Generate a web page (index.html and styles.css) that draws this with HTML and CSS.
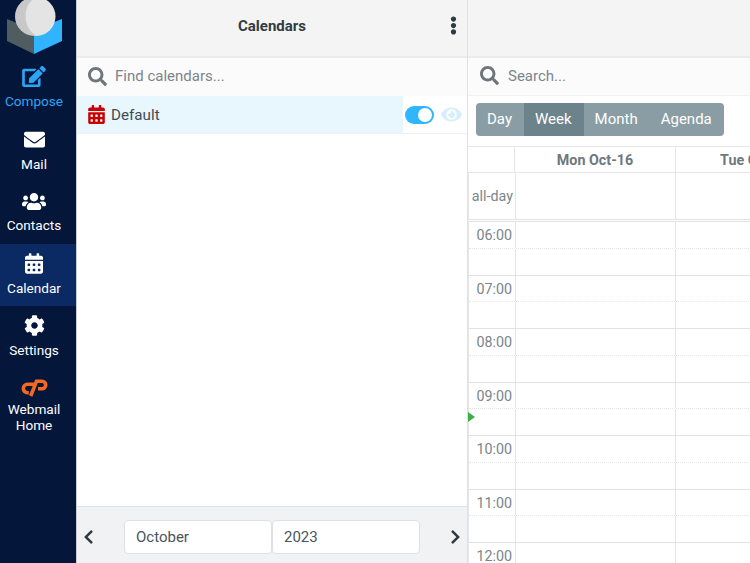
FILE: index.html
```html
<!DOCTYPE html>
<html lang="en">
<head>
    <meta charset="UTF-8">
    <meta name="viewport" content="width=device-width, initial-scale=1.0">
    <title>Calendar</title>
    <link rel="stylesheet" href="styles.css">
</head>
<body>
    <svg class="sprites" aria-hidden="true">
        <symbol id="i-search" viewBox="0 0 512 512"><path d="M505 442.7L405.3 343c-4.5-4.5-10.6-7-17-7H372c27.6-35.3 44-79.7 44-128C416 93.1 322.9 0 208 0S0 93.1 0 208s93.1 208 208 208c48.3 0 92.7-16.4 128-44v16.3c0 6.4 2.5 12.5 7 17l99.7 99.7c9.4 9.4 24.6 9.4 33.9 0l28.3-28.3c9.4-9.4 9.4-24.6.1-34zM208 336c-70.7 0-128-57.2-128-128 0-70.7 57.2-128 128-128 70.7 0 128 57.2 128 128 0 70.7-57.2 128-128 128z"/></symbol>
        <symbol id="i-calendar" viewBox="0 0 448 512"><path d="M0 464c0 26.5 21.5 48 48 48h352c26.5 0 48-21.5 48-48V192H0v272zm320-196c0-6.6 5.4-12 12-12h40c6.6 0 12 5.4 12 12v40c0 6.6-5.4 12-12 12h-40c-6.6 0-12-5.4-12-12v-40zm0 128c0-6.6 5.4-12 12-12h40c6.6 0 12 5.4 12 12v40c0 6.6-5.4 12-12 12h-40c-6.6 0-12-5.4-12-12v-40zM192 268c0-6.6 5.4-12 12-12h40c6.6 0 12 5.4 12 12v40c0 6.6-5.4 12-12 12h-40c-6.6 0-12-5.4-12-12v-40zm0 128c0-6.6 5.4-12 12-12h40c6.6 0 12 5.4 12 12v40c0 6.6-5.4 12-12 12h-40c-6.6 0-12-5.4-12-12v-40zM64 268c0-6.6 5.4-12 12-12h40c6.6 0 12 5.4 12 12v40c0 6.6-5.4 12-12 12H76c-6.6 0-12-5.4-12-12v-40zm0 128c0-6.6 5.4-12 12-12h40c6.6 0 12 5.4 12 12v40c0 6.6-5.4 12-12 12H76c-6.6 0-12-5.4-12-12v-40zM400 64h-48V16c0-8.8-7.2-16-16-16h-32c-8.8 0-16 7.2-16 16v48H160V16c0-8.8-7.2-16-16-16h-32c-8.8 0-16 7.2-16 16v48H48C21.5 64 0 85.5 0 112v48h448v-48c0-26.5-21.5-48-48-48z"/></symbol>
    </svg>

    <div class="app">
        <nav class="sidebar">
            <div class="logo">
                <svg viewBox="0 0 70 57" width="70" height="57">
                    <polygon points="7,19 34,30 34,54 7,41" fill="#4f5c60"/>
                    <polygon points="34,30 62,19 62,41 34,54" fill="#30b4ff"/>
                    <circle cx="34.5" cy="16.5" r="19.5" fill="#c8c8c8"/>
                    <path d="M36 -3C28 2 25.500 9 25.500 16C25.500 24 29 31 36 36A19.500 19.500 0 0 0 36 -3z" fill="#e4e4e4"/>
                </svg>
            </div>
            <a class="nav-item compose" href="#">
                <svg viewBox="0 0 576 512" width="24" height="21"><path d="M402.6 83.2l90.2 90.2c3.8 3.8 3.8 10 0 13.8L274.4 405.6l-92.8 10.3c-12.4 1.4-22.9-9.1-21.5-21.5l10.3-92.8L388.8 83.2c3.8-3.8 10-3.8 13.8 0zm162-22.9l-48.8-48.8c-15.2-15.2-39.9-15.2-55.2 0l-35.4 35.4c-3.8 3.8-3.8 10 0 13.8l90.2 90.2c3.8 3.8 10 3.8 13.8 0l35.4-35.4c15.2-15.3 15.2-40 0-55.2zM384 346.2V448H64V128h229.8c3.2 0 6.2-1.3 8.5-3.5l40-40c7.6-7.6 2.2-20.5-8.5-20.5H48C21.5 64 0 85.5 0 112v352c0 26.5 21.5 48 48 48h352c26.5 0 48-21.5 48-48V306.2c0-10.7-12.9-16-20.5-8.5l-40 40c-2.2 2.3-3.5 5.3-3.5 8.5z"/></svg>
                <span>Compose</span>
            </a>
            <a class="nav-item mail" href="#">
                <svg viewBox="0 0 512 512" width="21" height="21"><path d="M502.3 190.8c3.9-3.1 9.7-.2 9.7 4.7V400c0 26.5-21.5 48-48 48H48c-26.5 0-48-21.5-48-48V195.6c0-5 5.7-7.8 9.7-4.7 22.4 17.4 52.1 39.5 154.1 113.6 21.1 15.4 56.7 47.8 92.2 47.6 35.7.3 72-32.8 92.3-47.6 102-74.1 131.6-96.3 154-113.7zM256 320c23.2.4 56.6-29.2 73.4-41.4 132.7-96.3 142.8-104.7 173.4-128.7 5.8-4.5 9.2-11.5 9.2-18.9v-19c0-26.5-21.5-48-48-48H48C21.5 64 0 85.5 0 112v19c0 7.4 3.4 14.3 9.2 18.9 30.6 23.9 40.7 32.4 173.4 128.7 16.8 12.2 50.2 41.8 73.4 41.4z"/></svg>
                <span>Mail</span>
            </a>
            <a class="nav-item contacts" href="#">
                <svg viewBox="0 0 640 512" width="24" height="21"><path d="M96 224c35.3 0 64-28.7 64-64s-28.7-64-64-64-64 28.7-64 64 28.7 64 64 64zm448 0c35.3 0 64-28.7 64-64s-28.7-64-64-64-64 28.7-64 64 28.7 64 64 64zm32 32h-64c-17.6 0-33.5 7.1-45.1 18.6 40.3 22.1 68.9 62 75.1 109.4h66c17.7 0 32-14.3 32-32v-32c0-35.3-28.7-64-64-64zm-256 0c61.9 0 112-50.1 112-112S381.9 32 320 32 208 82.1 208 144s50.1 112 112 112zm76.8 32h-8.3c-20.8 10-43.9 16-68.5 16s-47.6-6-68.5-16h-8.3C179.6 288 128 339.6 128 403.2V432c0 26.5 21.5 48 48 48h288c26.5 0 48-21.5 48-48v-28.8c0-63.6-51.6-115.2-115.2-115.2zm-223.7-13.4C161.5 263.1 145.6 256 128 256H64c-35.3 0-64 28.7-64 64v32c0 17.7 14.3 32 32 32h65.9c6.3-47.4 34.9-87.3 75.2-109.4z"/></svg>
                <span>Contacts</span>
            </a>
            <a class="nav-item active" href="#">
                <svg width="18" height="21"><use href="#i-calendar"/></svg>
                <span>Calendar</span>
            </a>
            <a class="nav-item" href="#">
                <svg viewBox="0 0 512 512" width="21" height="21"><path d="M487.4 315.7l-42.6-24.6c4.3-23.2 4.3-47 0-70.2l42.6-24.6c4.9-2.8 7.1-8.6 5.5-14-11.1-35.6-30-67.8-54.7-94.6-3.8-4.1-10-5.1-14.8-2.3L380.8 110c-17.9-15.4-38.5-27.3-60.8-35.1V25.8c0-5.6-3.9-10.5-9.4-11.7-36.7-8.2-74.3-7.8-109.2 0-5.5 1.2-9.4 6.1-9.4 11.7V75c-22.2 7.9-42.8 19.8-60.8 35.1L88.7 85.5c-4.9-2.8-11-1.9-14.8 2.3-24.7 26.7-43.6 58.9-54.7 94.6-1.7 5.4.6 11.2 5.5 14L67.3 221c-4.3 23.2-4.3 47 0 70.2l-42.6 24.6c-4.9 2.8-7.1 8.6-5.5 14 11.1 35.6 30 67.8 54.7 94.6 3.8 4.1 10 5.1 14.8 2.3l42.6-24.6c17.9 15.4 38.5 27.3 60.8 35.1v49.2c0 5.6 3.9 10.5 9.4 11.7 36.7 8.2 74.3 7.8 109.2 0 5.5-1.2 9.4-6.1 9.4-11.7v-49.2c22.2-7.9 42.8-19.8 60.8-35.1l42.6 24.6c4.9 2.8 11 1.9 14.8-2.3 24.7-26.7 43.6-58.9 54.7-94.6 1.5-5.5-.7-11.3-5.6-14.1zM256 336c-44.1 0-80-35.9-80-80s35.9-80 80-80 80 35.9 80 80-35.9 80-80 80z"/></svg>
                <span>Settings</span>
            </a>
            <a class="nav-item webmail" href="#">
                <svg class="cp-logo" viewBox="0 0 27 18" width="27" height="18">
                    <path d="M13 5.300H6.500a4.200 4.200 0 0 0 0 8.400H7.800"/>
                    <path d="M9.700 17L15.500 2.300H21a3.700 3.700 0 0 1 0 7.400H17"/>
                </svg>
                <span>Webmail<br>Home</span>
            </a>
        </nav>

        <section class="panel">
            <div class="panel-header">
                <h2>Calendars</h2>
                <svg class="menu-dots" viewBox="0 0 192 512" width="7" height="19"><path d="M96 184c39.8 0 72 32.2 72 72s-32.2 72-72 72-72-32.2-72-72 32.2-72 72-72zM24 80c0 39.8 32.2 72 72 72s72-32.2 72-72S135.8 8 96 8 24 40.2 24 80zm0 352c0 39.8 32.2 72 72 72s72-32.2 72-72-32.2-72-72-72-72 32.2-72 72z"/></svg>
            </div>
            <div class="search-row">
                <svg class="search-icon"><use href="#i-search"/></svg>
                <span>Find calendars...</span>
            </div>
            <div class="calendar-row">
                <div class="calendar-name">
                    <svg class="calendar-icon"><use href="#i-calendar"/></svg>
                    <span>Default</span>
                </div>
                <div class="calendar-actions">
                    <span class="toggle"></span>
                    <svg class="eye" viewBox="0 0 576 512" width="21" height="19"><path d="M572.52 241.4C518.29 135.59 410.93 64 288 64S57.68 135.64 3.48 241.41a32.35 32.35 0 0 0 0 29.19C57.71 376.41 165.07 448 288 448s230.32-71.64 284.52-177.41a32.35 32.35 0 0 0 0-29.19zM288 400a144 144 0 1 1 144-144 143.93 143.93 0 0 1-144 144zm0-240a95.31 95.31 0 0 0-25.31 3.79 47.85 47.85 0 0 1-66.9 66.9A95.78 95.78 0 1 0 288 160z"/></svg>
                </div>
            </div>
            <div class="panel-spacer"></div>
            <div class="month-picker">
                <svg class="chevron" viewBox="0 0 320 512" width="11" height="16"><path d="M34.52 239.03L228.87 44.69c9.37-9.37 24.57-9.37 33.94 0l22.67 22.67c9.36 9.36 9.37 24.52.04 33.9L131.49 256l154.02 154.75c9.34 9.38 9.32 24.54-.04 33.9l-22.67 22.67c-9.37 9.37-24.57 9.37-33.94 0L34.52 272.97c-9.37-9.37-9.37-24.57 0-33.94z"/></svg>
                <div class="selects">
                    <div class="select">October</div>
                    <div class="select">2023</div>
                </div>
                <svg class="chevron" viewBox="0 0 320 512" width="11" height="16"><path d="M285.476 272.971L91.132 467.314c-9.373 9.373-24.569 9.373-33.941 0l-22.667-22.667c-9.357-9.357-9.375-24.522-.04-33.901L188.505 256 34.484 101.255c-9.335-9.379-9.317-24.544.04-33.901l22.667-22.667c9.373-9.373 24.569-9.373 33.941 0L285.475 239.03c9.373 9.372 9.373 24.568.001 33.941z"/></svg>
            </div>
        </section>

        <main class="main">
            <div class="main-header"></div>
            <div class="search-row main-search">
                <svg class="search-icon"><use href="#i-search"/></svg>
                <span>Search...</span>
            </div>
            <div class="toolbar">
                <div class="view-buttons">
                    <a href="#">Day</a>
                    <a href="#" class="selected">Week</a>
                    <a href="#">Month</a>
                    <a href="#">Agenda</a>
                </div>
            </div>
            <div class="week-head">
                <div class="axis"></div>
                <div class="day">Mon Oct-16</div>
                <div class="day">Tue Oct-17</div>
            </div>
            <div class="all-day">
                <div class="axis">all-day</div>
                <div class="day"></div>
                <div class="day"></div>
            </div>
            <div class="grid">
                <div class="hour"><div class="axis">06:00</div><div class="day"></div><div class="day"></div></div>
                <div class="half"><div class="axis"></div><div class="day"></div><div class="day"></div></div>
                <div class="hour"><div class="axis">07:00</div><div class="day"></div><div class="day"></div></div>
                <div class="half"><div class="axis"></div><div class="day"></div><div class="day"></div></div>
                <div class="hour"><div class="axis">08:00</div><div class="day"></div><div class="day"></div></div>
                <div class="half"><div class="axis"></div><div class="day"></div><div class="day"></div></div>
                <div class="hour"><div class="axis">09:00</div><div class="day"></div><div class="day"></div></div>
                <div class="half"><div class="axis"></div><div class="day"></div><div class="day"></div></div>
                <div class="hour"><div class="axis">10:00</div><div class="day"></div><div class="day"></div></div>
                <div class="half"><div class="axis"></div><div class="day"></div><div class="day"></div></div>
                <div class="hour"><div class="axis">11:00</div><div class="day"></div><div class="day"></div></div>
                <div class="half"><div class="axis"></div><div class="day"></div><div class="day"></div></div>
                <div class="hour"><div class="axis">12:00</div><div class="day"></div><div class="day"></div></div>
                <span class="now-arrow"></span>
            </div>
        </main>
    </div>
</body>
</html>
```

FILE: styles.css
```css
html, body {
    margin: 0;
    padding: 0;
    height: 100%;
    overflow: hidden;
}
body {
    font-family: Roboto, "Liberation Sans", sans-serif;
    font-size: 15px;
    color: #3f4b53;
    background-color: #fff;
}
a {
    text-decoration: none;
    color: inherit;
}
.sprites {
    display: none;
}
.app {
    display: flex;
    height: 563px;
}

/* left nav */
.sidebar {
    width: 76px;
    flex: none;
    background-color: #04173b;
    color: #fff;
}
.logo {
    height: 57px;
    overflow: hidden;
}
.logo svg {
    display: block;
}
.nav-item {
    display: flex;
    flex-direction: column;
    align-items: center;
    height: 62.3px;
    box-sizing: border-box;
    padding: 9px 8px 0 0;
    font-size: 13.6px;
    line-height: 16px;
    text-align: center;
}
.nav-item svg {
    flex: none;
    fill: #fff;
    margin-bottom: 6px;
}
.nav-item.compose {
    color: #2da5f5;
}
.nav-item.compose svg {
    fill: #2da5f5;
}
.nav-item.mail {
    padding-top: 10px;
}
.nav-item.contacts svg {
    margin-bottom: 5px;
}
.nav-item.active {
    background-color: #0b2a63;
}
.nav-item.webmail {
    padding-top: 11px;
}
.nav-item.webmail svg {
    margin-bottom: 4px;
}
.nav-item .cp-logo {
    fill: none;
}
.cp-logo path {
    fill: none;
    stroke: #f26a21;
    stroke-width: 3.6;
}

/* calendars panel */
.panel {
    width: 392px;
    flex: none;
    display: flex;
    flex-direction: column;
    border-left: 1px solid #c9ced4;
    border-right: 1px solid #dfe2e4;
    box-sizing: border-box;
}
.panel-header {
    position: relative;
    height: 58px;
    flex: none;
    box-sizing: border-box;
    display: flex;
    align-items: center;
    justify-content: center;
    padding-bottom: 5px;
    background-color: #f4f4f4;
    border-bottom: 2px solid #e9ecec;
}
.panel-header h2 {
    margin: 0;
    font-size: 15px;
    font-weight: 700;
    color: #333b41;
}
.menu-dots {
    position: absolute;
    right: 10px;
    top: 16px;
    fill: #2f3a40;
}
.search-row {
    height: 38px;
    flex: none;
    display: flex;
    align-items: center;
    box-sizing: border-box;
    padding: 0 0 2px 11px;
    background-color: #fbfbfb;
    color: #7b858b;
    font-size: 15px;
}
.search-icon {
    width: 19px;
    height: 19px;
    margin-right: 8px;
    fill: #6f767a;
}
.calendar-row {
    display: flex;
    height: 38px;
    flex: none;
    border-bottom: 1px solid #f0f1f2;
    box-sizing: border-box;
}
.calendar-name {
    flex: 1;
    display: flex;
    align-items: center;
    padding-left: 11px;
    background-color: #e8f6fe;
    font-size: 15.2px;
}
.calendar-icon {
    width: 17px;
    height: 19px;
    margin-right: 6px;
    fill: #cc0000;
}
.calendar-actions {
    width: 64px;
    display: flex;
    align-items: center;
    padding-left: 2px;
    box-sizing: border-box;
}
.toggle {
    position: relative;
    display: block;
    width: 29px;
    height: 18px;
    border-radius: 9px;
    background-color: #30b6ff;
    margin-right: 7px;
}
.toggle::after {
    content: "";
    position: absolute;
    right: 2px;
    top: 2px;
    width: 14px;
    height: 14px;
    border-radius: 50%;
    background-color: #fff;
}
.eye {
    fill: #d5effd;
}
.panel-spacer {
    flex: 1;
}
.month-picker {
    height: 57px;
    flex: none;
    display: flex;
    align-items: center;
    justify-content: space-between;
    box-sizing: border-box;
    padding: 4px 6px 0;
    background-color: #f0f2f4;
    border-top: 1px solid #dfe3e6;
}
.chevron {
    fill: #2f3a40;
}
.selects {
    display: flex;
}
.select {
    width: 148px;
    height: 34px;
    box-sizing: border-box;
    padding-left: 11px;
    line-height: 33px;
    background-color: #fff;
    border: 1px solid #dde1e4;
    border-radius: 4px;
    font-size: 15px;
    color: #4a555c;
}

/* week view */
.main {
    flex: 1;
    min-width: 0;
    overflow: hidden;
    display: flex;
    flex-direction: column;
}
.main-header {
    height: 58px;
    flex: none;
    box-sizing: border-box;
    background-color: #f4f4f4;
    border-bottom: 2px solid #e9ecec;
}
.main-search {
    padding-left: 12px;
    border-bottom: 1px solid #f0f1f2;
}
.main-search .search-icon {
    margin-right: 9px;
}
.toolbar {
    height: 50px;
    flex: none;
    box-sizing: border-box;
    padding: 7px 8px 0;
}
.view-buttons {
    display: inline-flex;
    height: 33px;
    border-radius: 4px;
    overflow: hidden;
    background-color: #8a9da4;
    color: #fff;
    font-size: 15px;
    line-height: 33px;
}
.view-buttons a {
    padding: 0 12px 0 11px;
}
.view-buttons .selected {
    background-color: #6d838c;
}
.week-head, .all-day, .hour, .half {
    display: flex;
    width: 420px;
}
.axis {
    width: 46px;
    flex: none;
    box-sizing: border-box;
    text-align: right;
    padding-right: 2px;
    font-size: 14.3px;
    color: #7b858b;
}
.day {
    width: 161px;
    flex: none;
    box-sizing: border-box;
    border-left: 1px solid #e4e6e7;
}
.week-head {
    height: 27px;
    flex: none;
    box-sizing: border-box;
    border-top: 1px solid #e4e6e7;
    border-bottom: 1px solid #e4e6e7;
}
.week-head .day {
    font-size: 14.3px;
    font-weight: 700;
    line-height: 27px;
    text-align: center;
    color: #6f787e;
}
.all-day {
    height: 49px;
    flex: none;
    box-sizing: border-box;
    border-left: 1px solid #e4e6e7;
    border-bottom: 3px double #dfe1e2;
}
.all-day .axis {
    line-height: 46px;
}
.all-day .day, .hour .day, .half .day {
    width: 160px;
}
.grid {
    position: relative;
    flex: none;
    border-left: 1px solid #e4e6e7;
}
.hour {
    height: 26.75px;
    box-sizing: border-box;
    border-bottom: 1px dotted #e6e7e8;
}
.hour .axis {
    line-height: 27px;
    padding-right: 3px;
}
.half {
    height: 26.75px;
    box-sizing: border-box;
    border-bottom: 1px solid #e0e2e3;
}
.now-arrow {
    position: absolute;
    left: -1px;
    top: 190px;
    border-left: 7px solid #3fae49;
    border-top: 5px solid transparent;
    border-bottom: 5px solid transparent;
}
```
